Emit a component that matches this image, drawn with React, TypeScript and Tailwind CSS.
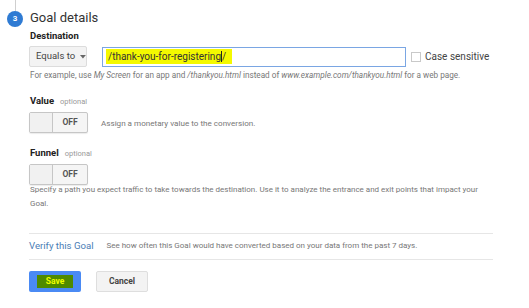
const font = { fontFamily: 'Roboto, "Liberation Sans", sans-serif' }

function Toggle() {
  return (
    <div className="flex h-[21px] w-[59px] rounded-[2px] border border-[#c6c6c6] bg-[#f5f5f5] shadow-[0_1px_1px_rgba(0,0,0,0.08)]">
      <div className="w-[23px] border-r border-[#c6c6c6] bg-[#f1f1f1]" />
      <div className="flex flex-1 items-center justify-center text-[8.5px] font-bold text-[#555]">OFF</div>
    </div>
  )
}

export default function App() {
  return (
    <div className="h-[308px] w-[529px] overflow-hidden bg-white text-[#333]" style={font}>
      {/* step header */}
      <div className="flex">
        <div className="flex w-[30px] flex-col items-center">
          <div className="h-[11px] w-px bg-[#cfcfcf]" />
          <div className="flex h-[16px] w-[16px] items-center justify-center rounded-full bg-[#2f7bd3] text-[8px] font-bold text-white">
            3
          </div>
        </div>
        <div className="pt-[9px] text-[13px] leading-[18px] text-[#333]">Goal details</div>
      </div>

      <div className="pl-[29px]">
        <div className="mt-[3px] pl-px text-[9.5px] font-bold leading-[12px] text-[#222]">Destination</div>

        <div className="mt-[4px] flex items-center">
          <div className="flex h-[21px] w-[58px] shrink-0 items-center gap-[5px] whitespace-nowrap rounded-[2px] border border-[#dcdcdc] bg-[#f3f3f3] pl-[6px] text-[9.5px] text-[#444]">
            Equals to
            <svg width="6" height="4" viewBox="0 0 6 4">
              <path d="M0 0h6L3 3.5z" fill="#666" />
            </svg>
          </div>
          <div className="ml-[15px] flex h-[20px] w-[304px] shrink-0 items-center border border-[#7aa6e3] pl-[3px]">
            <span className="flex h-[15px] items-center whitespace-nowrap bg-[#f4f900] pl-[2px] pr-[6px] text-[10px] text-[#333]">
              /thank-you-for-registering
              <span className="inline-block h-[11px] w-px bg-[#222]" />/
            </span>
          </div>
          <div className="ml-[5px] h-[10px] w-[10px] shrink-0 border border-[#c9c9c9] bg-white" />
          <span className="ml-[4px] whitespace-nowrap text-[10px] text-[#444]">Case sensitive</span>
        </div>

        <div className="mt-[1.5px] whitespace-nowrap pl-px text-[8.2px] leading-[12px] text-[#777]">
          For example, use <i>My Screen</i> for an app and <i>/thankyou.html</i> instead of{' '}
          <i>www.example.com/thankyou.html</i> for a web page.
        </div>

        <div className="mt-[14.5px] flex items-baseline gap-[6px] pl-px">
          <span className="text-[9.5px] font-bold leading-[12px] text-[#222]">Value</span>
          <span className="text-[7.5px] text-[#999]">optional</span>
        </div>
        <div className="mt-[5px] flex items-center">
          <Toggle />
          <span className="ml-[13px] text-[8.1px] text-[#777]">Assign a monetary value to the conversion.</span>
        </div>

        <div className="mt-[14px] flex items-baseline gap-[6px] pl-px">
          <span className="text-[9.5px] font-bold leading-[12px] text-[#222]">Funnel</span>
          <span className="text-[7.5px] text-[#999]">optional</span>
        </div>
        <div className="mt-[4px]">
          <Toggle />
        </div>
        <div className="-mt-[2px] w-[462px] pl-px text-[8px] leading-[14px] text-[#777]">
          Specify a path you expect traffic to take towards the destination. Use it to analyze the entrance and exit
          points that impact your Goal.
        </div>

        <div className="mt-[22px] w-[464px] border-t border-[#e6e6e6]" />
        <div className="flex h-[26px] w-[464px] items-center border-b border-[#e6e6e6]">
          <span className="whitespace-nowrap text-[9.6px] text-[#4a7db5]">Verify this Goal</span>
          <span className="ml-[13px] whitespace-nowrap text-[8px] text-[#777]">
            See how often this Goal would have converted based on your data from the past 7 days.
          </span>
        </div>

        <div className="mt-[11px] flex gap-[15px]">
          <div className="flex h-[21px] w-[52px] items-center justify-center rounded-[2px] bg-[#4a8af4]">
            <span className="flex h-[13px] w-[36px] items-center justify-center bg-[#4f8a00] text-[8.5px] font-bold text-[#eeff00]">
              Save
            </span>
          </div>
          <div className="flex h-[21px] w-[52px] items-center justify-center rounded-[2px] border border-[#dedede] bg-[#f3f3f3] text-[8.5px] font-bold text-[#444]">
            Cancel
          </div>
        </div>
      </div>
    </div>
  )
}
